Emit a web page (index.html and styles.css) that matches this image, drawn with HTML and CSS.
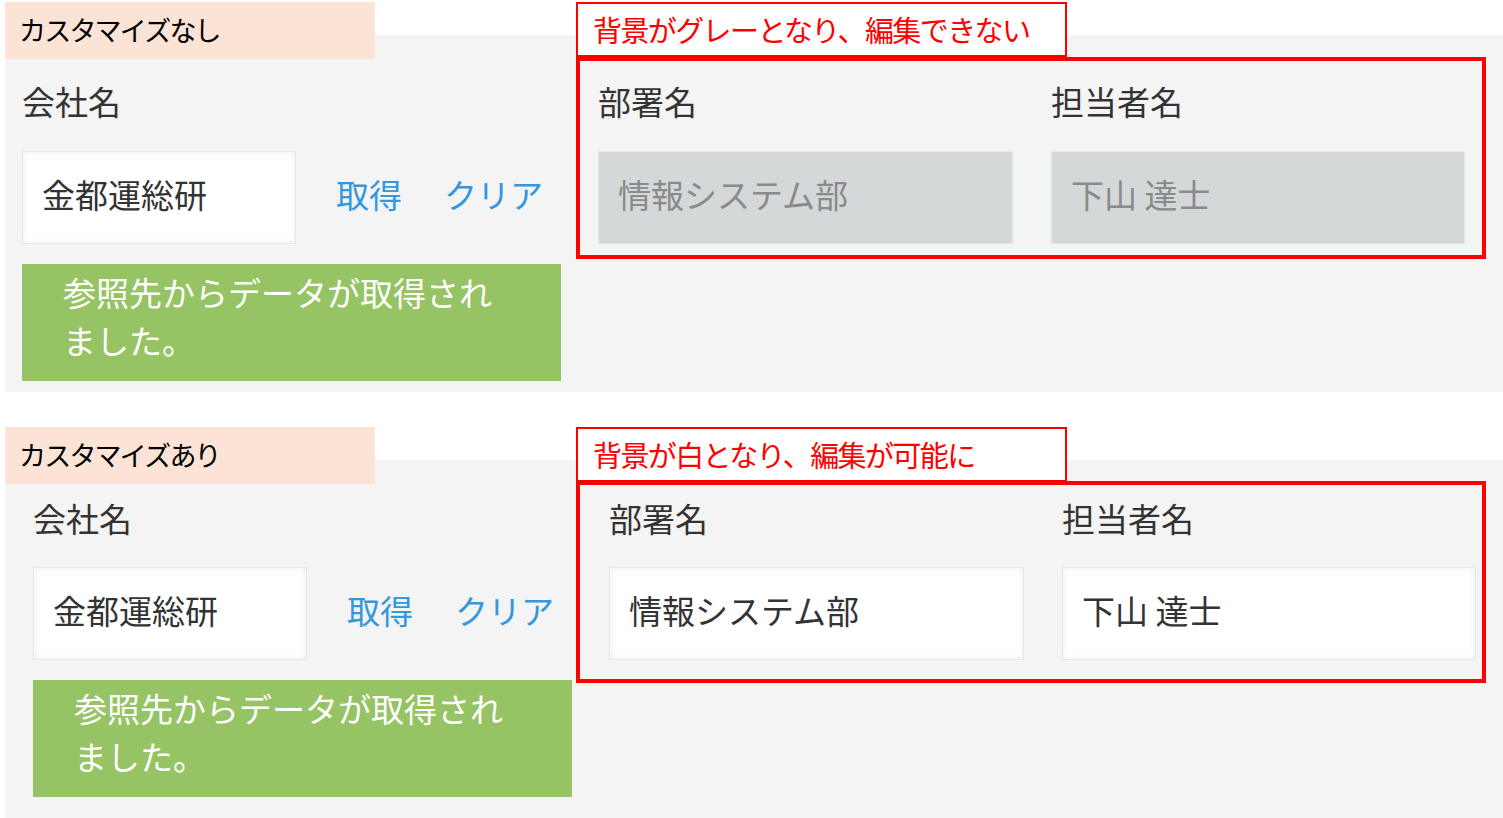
FILE: index.html
```html
<!DOCTYPE html>
<html lang="ja">
<head>
<meta charset="utf-8">
<title>カスタマイズ比較</title>
<link rel="stylesheet" href="styles.css">
</head>
<body>
  <section class="section section-before">
    <div class="tab">カスタマイズなし</div>
    <div class="form">
      <div class="field company">
        <div class="label">会社名</div>
        <div class="lookup">
          <div class="input">金都運総研</div>
          <a class="link">取得</a>
          <a class="link">クリア</a>
        </div>
        <div class="notice">参照先からデータが取得され<br>ました。</div>
      </div>
      <div class="field dept">
        <div class="label">部署名</div>
        <div class="input disabled">情報システム部</div>
      </div>
      <div class="field person">
        <div class="label">担当者名</div>
        <div class="input disabled">下山 達士</div>
      </div>
    </div>
    <div class="note">背景がグレーとなり、編集できない</div>
    <div class="frame"></div>
  </section>

  <section class="section section-after">
    <div class="tab">カスタマイズあり</div>
    <div class="form">
      <div class="field company">
        <div class="label">会社名</div>
        <div class="lookup">
          <div class="input">金都運総研</div>
          <a class="link">取得</a>
          <a class="link">クリア</a>
        </div>
        <div class="notice">参照先からデータが取得され<br>ました。</div>
      </div>
      <div class="field dept">
        <div class="label">部署名</div>
        <div class="input">情報システム部</div>
      </div>
      <div class="field person">
        <div class="label">担当者名</div>
        <div class="input">下山 達士</div>
      </div>
    </div>
    <div class="note">背景が白となり、編集が可能に</div>
    <div class="frame"></div>
  </section>
</body>
</html>
```

FILE: styles.css
```css
* {
  box-sizing: border-box;
}

html, body {
  margin: 0;
  padding: 0;
  background: #ffffff;
}

body {
  font-family: "Noto Sans CJK JP", "Noto Sans", sans-serif;
  color: #333333;
  padding-top: 2px;
}

.section {
  position: relative;
  margin-left: 5px;
  background: linear-gradient(to bottom, #ffffff 0, #ffffff 33px, #f4f4f4 33px, #f4f4f4 100%);
}

.section-after {
  margin-top: 35px;
}

.tab {
  width: 370px;
  height: 57px;
  background: #fbe3d6;
  color: #000000;
  font-size: 27px;
  letter-spacing: -1.8px;
  line-height: 55px;
  padding-left: 14px;
  position: relative;
}

.form {
  display: flex;
  gap: 37px;
}

.section-before .form {
  padding: 21px 0 11px 17px;
}

.section-after .form {
  padding: 13px 0 21px 28px;
}

.field {
  display: flex;
  flex-direction: column;
}

.company {
  width: 539px;
}

.dept {
  width: 415px;
}

.person {
  width: 414px;
  margin-left: 1px;
}

.label {
  font-size: 33px;
  line-height: 42px;
  height: 48px;
  color: #333333;
}

.section-before .label {
  margin-bottom: 23px;
}

.section-after .label {
  margin-bottom: 22px;
}

.lookup {
  display: flex;
  align-items: center;
}

.input {
  height: 93px;
  border: 1px solid #e3e7e8;
  background: #ffffff;
  box-shadow: inset 0 0 7px rgba(0, 0, 0, 0.07);
  font-size: 33px;
  line-height: 84px;
  padding-left: 19px;
  color: #333333;
  white-space: nowrap;
}

.lookup .input {
  width: 274px;
  flex: none;
}

.input.disabled {
  background: #d4d8d8;
  box-shadow: none;
  color: #8a8a8a;
}

.link {
  color: #3498db;
  font-size: 33px;
  line-height: 48px;
  padding-bottom: 7px;
  margin-left: 40px;
}

.link + .link {
  margin-left: 42px;
}

.notice {
  margin-top: 20px;
  height: 117px;
  background: #96c364;
  color: #ffffff;
  font-size: 33px;
  line-height: 48px;
  padding: 4px 20px 0 41px;
  white-space: nowrap;
}

.note {
  position: absolute;
  left: 571px;
  top: 0;
  width: 491px;
  height: 55px;
  border: 2px solid #ff0000;
  background: #ffffff;
  color: #ff0000;
  font-size: 29px;
  letter-spacing: -1.6px;
  line-height: 50px;
  padding-left: 15px;
  white-space: nowrap;
}

.frame {
  position: absolute;
  left: 571px;
  width: 910px;
  height: 202px;
  border: 4px solid #ff0000;
}

.section-before .frame {
  top: 55px;
}

.section-after .frame {
  top: 54px;
}
```
